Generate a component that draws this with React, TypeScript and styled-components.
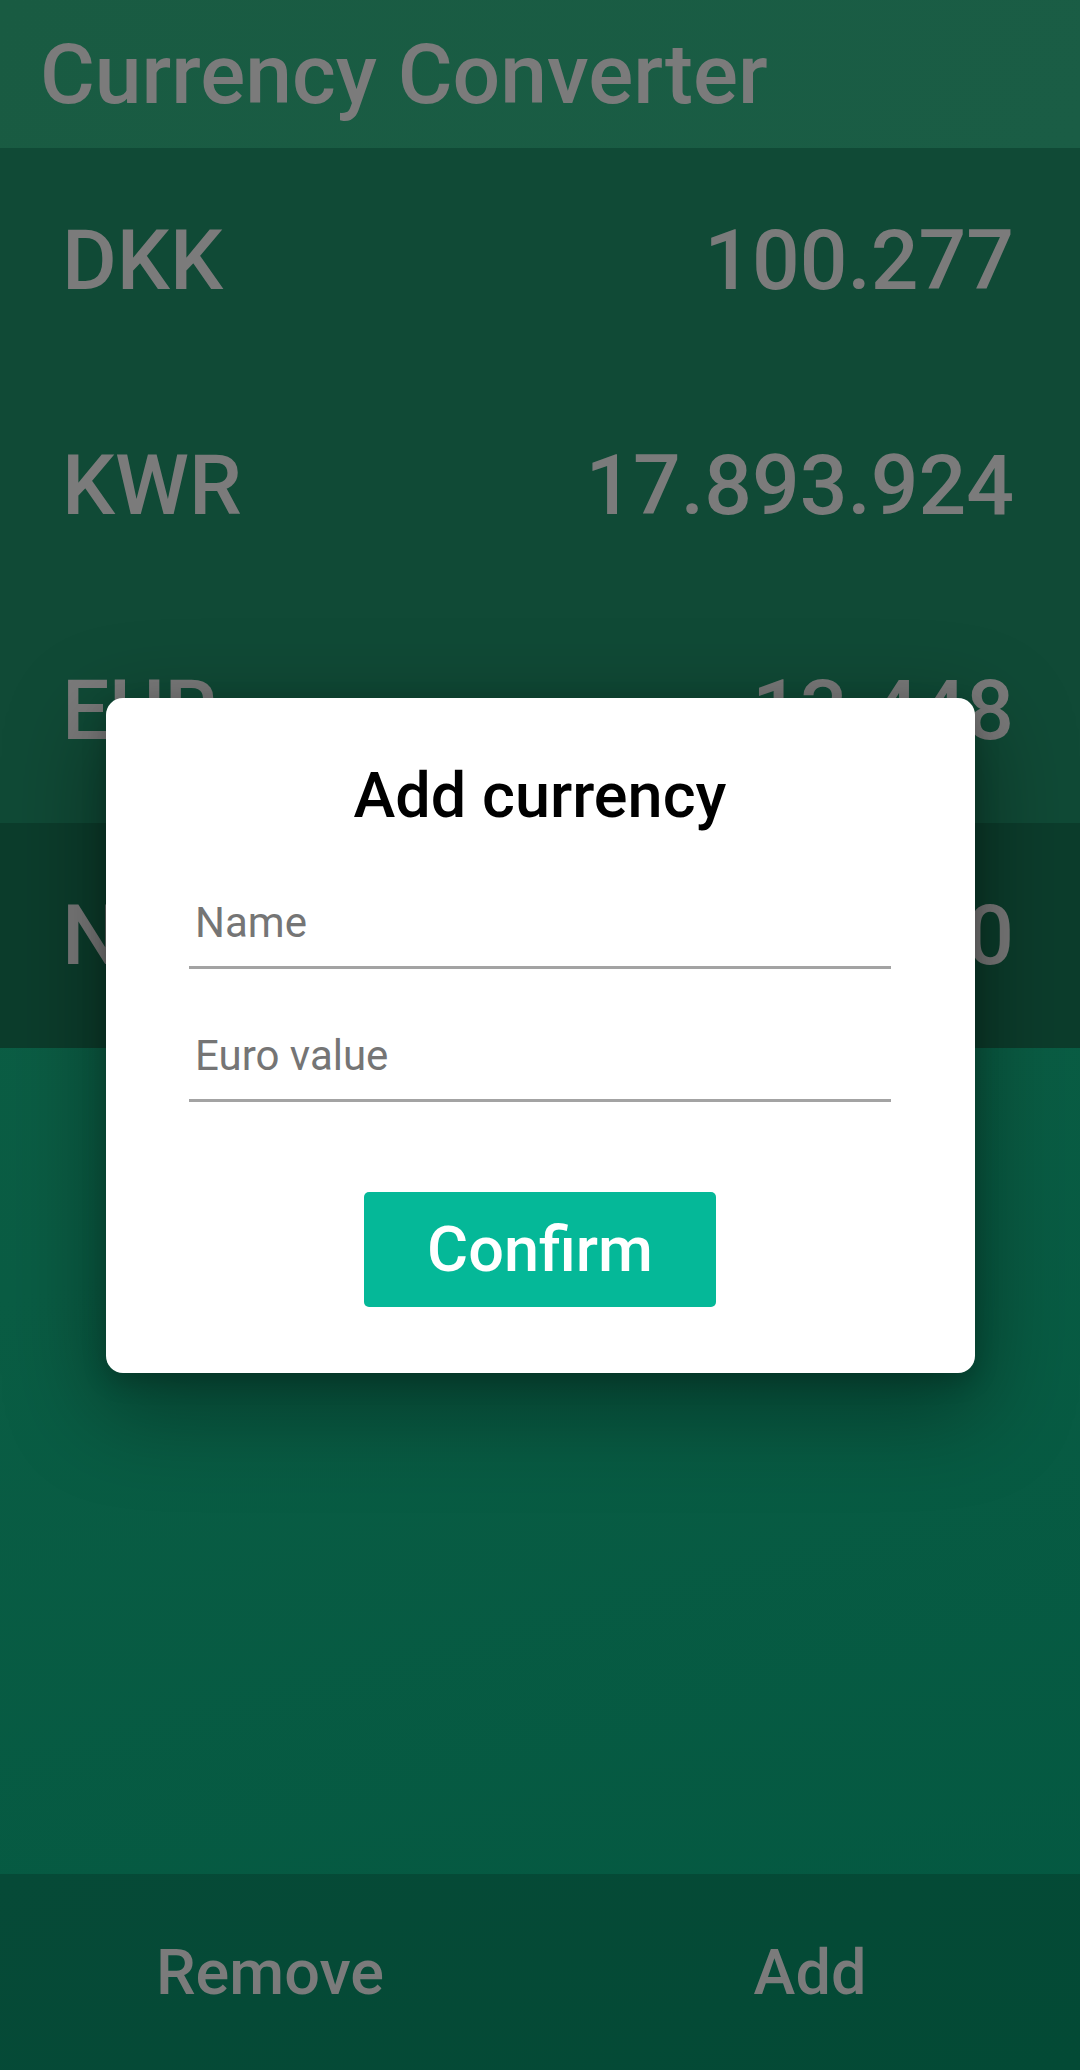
import styled, { createGlobalStyle } from "styled-components";

const GlobalStyle = createGlobalStyle`
  html, body {
    margin: 0;
    padding: 0;
  }
  body {
    font-family: Roboto, "Noto Sans", "Liberation Sans", sans-serif;
  }
  * {
    box-sizing: border-box;
  }
`;

const Page = styled.div`
  width: 1080px;
  height: 2070px;
  display: flex;
  flex-direction: column;
  background: linear-gradient(165deg, #115f45 0%, #0a5d44 55%, #035841 100%);
  position: relative;
  overflow: hidden;
`;

const Header = styled.header`
  height: 148px;
  flex-shrink: 0;
  display: flex;
  align-items: center;
  padding-left: 40px;
  background: linear-gradient(120deg, #195b42 0%, #1a5d45 100%);
`;

const Title = styled.h1`
  margin: 0;
  font-size: 84px;
  font-weight: 500;
  color: #7b7b7b;
  line-height: normal;
`;

const List = styled.div`
  display: flex;
  flex-direction: column;
  flex-shrink: 0;
`;

const Row = styled.div<{ $selected?: boolean }>`
  height: 225px;
  display: flex;
  align-items: center;
  justify-content: space-between;
  padding: 0 66px 0 62px;
  background: ${(p) => (p.$selected ? "#0c3d2c" : "#104a36")};
`;

const RowText = styled.span`
  font-size: 84px;
  font-weight: 500;
  color: #7b7b7b;
`;

const Spacer = styled.div`
  flex: 1;
`;

const Footer = styled.footer`
  height: 196px;
  flex-shrink: 0;
  display: grid;
  grid-template-columns: 1fr 1fr;
  background: linear-gradient(150deg, #064a37 0%, #034a35 100%);
`;

const FooterButton = styled.button`
  border: none;
  background: transparent;
  font-family: inherit;
  font-size: 63px;
  font-weight: 500;
  color: #7b7b7b;
  display: flex;
  align-items: center;
  justify-content: center;
  padding: 0;
`;

const Backdrop = styled.div`
  position: absolute;
  inset: 0;
  display: flex;
  align-items: center;
  justify-content: center;
`;

const Dialog = styled.div`
  width: 869px;
  background: #ffffff;
  border-radius: 17px;
  padding: 60px 83px 66px;
  display: flex;
  flex-direction: column;
  align-items: center;
  box-shadow: 0 30px 90px 10px rgba(0, 0, 0, 0.35), 0 8px 24px rgba(0, 0, 0, 0.2);
`;

const DialogTitle = styled.h2`
  margin: 0 0 57px;
  font-size: 63px;
  font-weight: 500;
  line-height: 75px;
  color: #000000;
`;

const Field = styled.input<{ $last?: boolean }>`
  width: 702px;
  border: none;
  border-bottom: 3px solid #a3a3a3;
  outline: none;
  font-family: inherit;
  font-size: 42px;
  line-height: normal;
  color: #222;
  padding: 8px 6px 19px;
  margin-bottom: ${(p) => (p.$last ? "90px" : "54px")};
  background: transparent;

  &::placeholder {
    color: #757575;
  }
`;

const ConfirmButton = styled.button`
  width: 352px;
  height: 115px;
  border: none;
  border-radius: 5px;
  background: #05b898;
  color: #ffffff;
  font-family: inherit;
  font-size: 63px;
  font-weight: 500;
  padding: 0;
`;

const currencies = [
  { code: "DKK", value: "100.277" },
  { code: "KWR", value: "17.893.924" },
  { code: "EUR", value: "13.448" },
  { code: "NOK", value: "142.610", selected: true },
];

export default function App() {
  return (
    <>
      <GlobalStyle />
      <Page>
        <Header>
          <Title>Currency Converter</Title>
        </Header>
        <List>
          {currencies.map((c) => (
            <Row key={c.code} $selected={c.selected}>
              <RowText>{c.code}</RowText>
              <RowText>{c.value}</RowText>
            </Row>
          ))}
        </List>
        <Spacer />
        <Footer>
          <FooterButton>Remove</FooterButton>
          <FooterButton>Add</FooterButton>
        </Footer>
        <Backdrop>
          <Dialog>
            <DialogTitle>Add currency</DialogTitle>
            <Field placeholder="Name" />
            <Field placeholder="Euro value" $last />
            <ConfirmButton>Confirm</ConfirmButton>
          </Dialog>
        </Backdrop>
      </Page>
    </>
  );
}
